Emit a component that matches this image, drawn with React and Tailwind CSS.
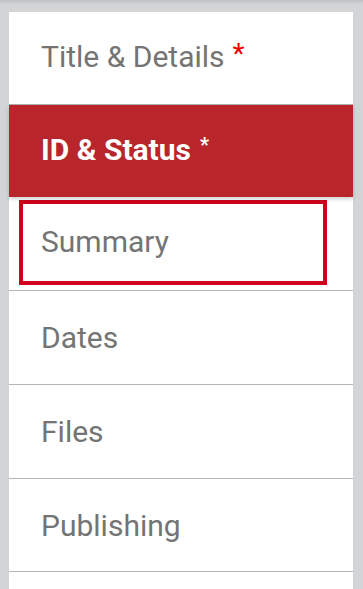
import React from "react";

const font = { fontFamily: "Roboto, 'Liberation Sans', sans-serif" };

function Row({ children, className = "" }) {
  return (
    <div className={`flex items-center border-b border-[#b5b5b1] pl-[32px] text-[30px] text-[#747474] ${className}`}>
      {children}
    </div>
  );
}

export default function App() {
  return (
    <div
      className="w-[363px] h-[589px] overflow-hidden bg-[#d3d4d6] pt-[12px] pl-[9px] pr-[10px] relative"
      style={font}
    >
      <div className="absolute top-0 left-0 right-0 h-[4px] bg-gradient-to-b from-[#bfc0c2] to-[#d3d4d6]" />
      <div className="bg-white h-full relative">
        <div className="flex items-center h-[93px] border-b border-[#b0b0ac] pl-[32px] text-[30px] text-[#747474]">
          <span className="translate-y-[-2px]">Title &amp; Details</span>
          <span className="text-[#ee0000] ml-[8px] text-[28px] translate-y-[-4px]">*</span>
        </div>
        <div className="relative flex items-center h-[92px] bg-[#b8252b] pl-[32px] text-[30px] font-bold text-white shadow-[0_2px_4px_rgba(0,0,0,0.2)] z-10">
          <span className="translate-y-[-2px]">ID &amp; Status</span>
          <span className="ml-[9px] text-[20px] translate-y-[-6px]">*</span>
        </div>
        <div className="h-[94px] border-b border-[#b5b5b1] pt-[3px] pl-[10px] pr-[26px]">
          <div className="h-[85px] border-[4px] border-[#d0021b] flex items-center pl-[18px] text-[30px] text-[#747474]">
            <span className="translate-y-[-1px]">Summary</span>
          </div>
        </div>
        <Row className="h-[94px]"><span>Dates</span></Row>
        <Row className="h-[94px]"><span>Files</span></Row>
        <Row className="h-[93px]"><span>Publishing</span></Row>
        <Row className="h-[93px]"><span></span></Row>
      </div>
    </div>
  );
}
